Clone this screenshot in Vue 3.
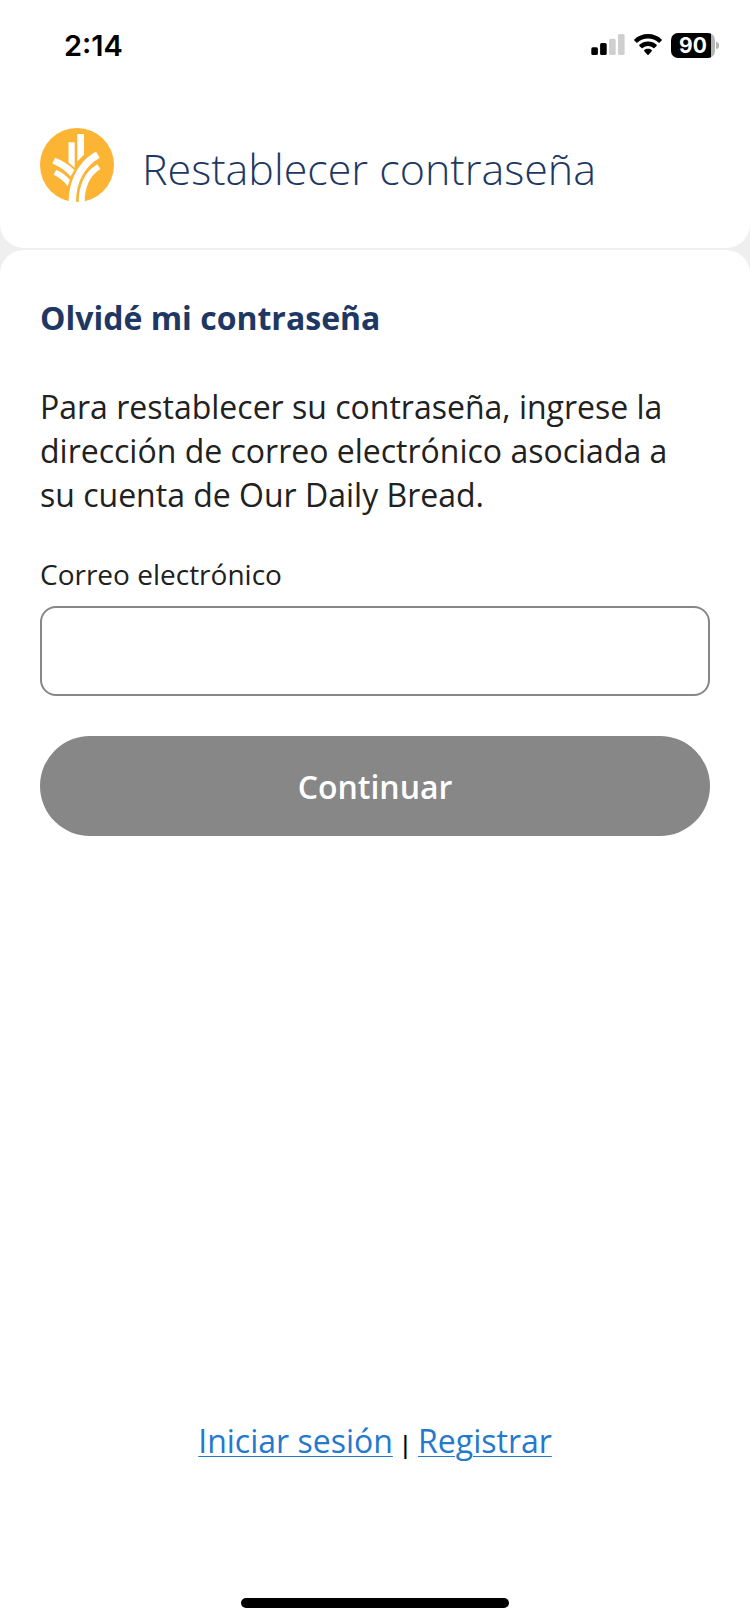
<script setup>
import { ref } from 'vue'

const email = ref('')
</script>

<template>
  <div class="screen">
    <header class="top">
      <div class="status">
        <span class="time">2:14</span>
        <div class="indicators">
          <svg class="signal" viewBox="0 0 34 22" aria-hidden="true">
            <rect x="0.3" y="13.3" width="6.6" height="7.7" rx="1.6" />
            <rect x="9.1" y="9.1" width="6.6" height="11.9" rx="1.6" />
            <rect class="off" x="18.1" y="4.8" width="6.6" height="16.2" rx="1.6" />
            <rect class="off" x="27" y="0" width="6.6" height="21" rx="1.6" />
          </svg>
          <svg class="wifi" viewBox="0 0 28 22" aria-hidden="true">
            <path d="M14 0C8.700 0 3.900 2 .3 5.400a.8.8 0 0 0 0 1.100L2.400 8.500a.8.8 0 0 0 1.100 0C6.400 5.900 10 4.500 14 4.500s7.600 1.400 10.500 4a.8.8 0 0 0 1.100 0l2.100-2a.8.8 0 0 0 0-1.100C24.100 2 19.300 0 14 0Z" />
            <path d="M14 7.500c-3.300 0-6.300 1.200-8.600 3.300a.8.8 0 0 0 0 1.100l2.200 2.100a.8.8 0 0 0 1 0A8 8 0 0 1 14 11.900a8 8 0 0 1 5.400 2.100.8.8 0 0 0 1 0l2.200-2.100a.8.8 0 0 0 0-1.100A12.600 12.600 0 0 0 14 7.500Z" />
            <path d="M14 14.800c-1.500 0-2.700.5-3.700 1.300a.8.8 0 0 0 0 1.100l3.200 3.500a.8.8 0 0 0 1 0l3.200-3.500a.8.8 0 0 0 0-1.100c-1-.8-2.200-1.300-3.700-1.300Z" />
          </svg>
          <div class="battery"><span class="level">90</span></div>
        </div>
      </div>
      <div class="brand">
        <svg class="logo" viewBox="0 0 74 74" aria-hidden="true">
          <circle cx="37" cy="37" r="37" fill="#fbb434" />
          <g fill="#fff">
            <path d="M37.300 6H44V26.500L37.300 33.500Z" />
            <path d="M28.500 14.300H34.700V39.800L28.500 34.600Z" />
            <path d="M28.700 74C28.700 54 38 33 56 23.800L59.800 29.800C44.500 38.500 36 54 36 74.500Z" />
            <path d="M38.700 74.500C38.700 58 44 44 57.300 36.200L60.300 41C49 48.500 44.700 60 44.700 74Z" />
            <path d="M15 29.800C22.500 32.500 29 36.800 34.300 42L30.600 48.600C25.500 42.500 19.500 38.500 12.300 35.600Z" />
            <path d="M16.300 41.800C21.500 44.300 26 47.500 29.800 51.800L27.800 58.200C24 53.500 19.500 49.700 13.600 46.800Z" />
          </g>
        </svg>
        <h1>Restablecer contraseña</h1>
      </div>
    </header>

    <main class="panel">
      <h2>Olvidé mi contraseña</h2>
      <p class="intro">
        Para restablecer su contraseña, ingrese la dirección de correo electrónico asociada a su cuenta de Our Daily Bread.
      </p>
      <form @submit.prevent>
        <label for="email">Correo electrónico</label>
        <input id="email" v-model="email" type="email" autocomplete="email" />
        <button type="submit">Continuar</button>
      </form>
      <nav class="links">
        <a href="#login">Iniciar sesión</a>
        <span class="divider">|</span>
        <a href="#register">Registrar</a>
      </nav>
      <div class="home-bar"></div>
    </main>
  </div>
</template>

<style>
body {
  background: #efefef;
}
</style>

<style scoped>
.screen {
  display: flex;
  flex-direction: column;
  gap: 2px;
  min-height: 100vh;
  background: #efefef;
  color: #212121;
  font-family: "Open Sans", "Noto Sans", sans-serif;
}

.top {
  background: #fff;
  border-radius: 0 0 24px 24px;
  padding-bottom: 46px;
}

.status {
  display: flex;
  align-items: center;
  justify-content: space-between;
  height: 90px;
  padding: 0 31px 0 64px;
  color: #000;
  font-family: Inter, sans-serif;
}

.time {
  font-size: 29px;
  font-weight: 600;
}

.indicators {
  display: flex;
  align-items: center;
  gap: 9px;
}

.signal {
  width: 34px;
  height: 22px;
}

.signal .off {
  fill: #cfcfcf;
}

.wifi {
  width: 28px;
  height: 22px;
}

.battery {
  position: relative;
  display: flex;
  align-items: center;
  justify-content: center;
  width: 44px;
  height: 25px;
  margin-right: 4px;
  border-radius: 7px;
  background: linear-gradient(to right, #000 90%, #b5b5b5 90%);
}

.battery::after {
  content: "";
  position: absolute;
  left: 45px;
  top: 9px;
  width: 3px;
  height: 7px;
  border-radius: 0 4px 4px 0;
  background: #b5b5b5;
}

.level {
  color: #fff;
  font-size: 21px;
  font-weight: 700;
  line-height: 25px;
}

.brand {
  display: flex;
  align-items: center;
  gap: 28px;
  padding: 38px 40px 0;
}

.logo {
  flex: none;
  width: 74px;
  height: 74px;
}

h1 {
  margin: 0;
  padding-top: 8px;
  color: #1e3863;
  font-size: 43px;
  font-weight: 300;
  line-height: 60px;
}

.panel {
  flex: 1;
  display: flex;
  flex-direction: column;
  padding: 46px 40px 16px;
  border-radius: 24px 24px 0 0;
  background: #fff;
}

h2 {
  margin: 0;
  color: #1e3863;
  font-size: 32px;
  font-weight: 700;
  line-height: 44px;
}

.intro {
  margin: 45px 0 38px;
  font-size: 32px;
  line-height: 44px;
}

form {
  display: flex;
  flex-direction: column;
}

label {
  margin-bottom: 13px;
  font-size: 28px;
  line-height: 38px;
}

input {
  box-sizing: border-box;
  width: 100%;
  height: 90px;
  margin: 0 0 40px;
  padding: 0 24px;
  border: 2px solid #878787;
  border-radius: 16px;
  background: #fff;
  color: inherit;
  font: inherit;
  font-size: 32px;
}

button {
  height: 100px;
  padding: 0;
  border: 0;
  border-radius: 50px;
  background: #878787;
  color: #fff;
  font: inherit;
  font-size: 32px;
  font-weight: 600;
}

.links {
  display: flex;
  align-items: baseline;
  justify-content: center;
  gap: 6px;
  margin-top: auto;
  font-size: 32px;
  line-height: 44px;
}

.links a {
  color: #2479cc;
  text-decoration-thickness: 1px;
  text-underline-offset: 3px;
}

.divider {
  color: #000;
  font-size: 24px;
  font-weight: 600;
}

.home-bar {
  align-self: center;
  width: 268px;
  height: 10px;
  margin-top: 132px;
  border-radius: 5px;
  background: #000;
}
</style>
